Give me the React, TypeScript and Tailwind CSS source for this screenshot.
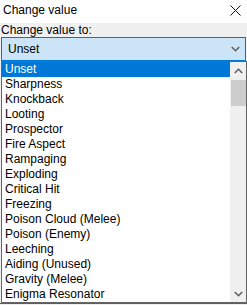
const items = [
  'Unset',
  'Sharpness',
  'Knockback',
  'Looting',
  'Prospector',
  'Fire Aspect',
  'Rampaging',
  'Exploding',
  'Critical Hit',
  'Freezing',
  'Poison Cloud (Melee)',
  'Poison (Enemy)',
  'Leeching',
  'Aiding (Unused)',
  'Gravity (Melee)',
  'Enigma Resonator',
];

function Chevron({ up, className }: { up?: boolean; className?: string }) {
  return (
    <svg width="9" height="6" viewBox="0 0 9 6" className={className}>
      <path
        d={up ? 'M0.8 5 L4.5 1.3 L8.2 5' : 'M0.8 1 L4.5 4.7 L8.2 1'}
        fill="none"
        stroke="#606060"
        strokeWidth="1.6"
      />
    </svg>
  );
}

export default function App() {
  return (
    <div className="w-[247px] h-[305px] overflow-hidden bg-[#f0f0f0] text-[12px] leading-[15px] text-black font-['Liberation_Sans',Arial,sans-serif]">
      {/* Title bar */}
      <div className="h-[23px] bg-white flex items-center justify-between pl-[3px] pr-[6px]">
        <span className="-mt-[3px]">Change value</span>
        <svg width="11" height="11" viewBox="0 0 11 11" className="-mt-[2px]">
          <path d="M0.5 0.5 L10.5 10.5 M10.5 0.5 L0.5 10.5" stroke="#111" strokeWidth="1" />
        </svg>
      </div>

      {/* Label */}
      <div className="h-[13px] pl-[1px] leading-[13px] mt-[1px]">Change value to:</div>

      {/* Combo */}
      <div className="ml-[1px] w-[245px] h-[24px] border border-[#0078d7] bg-[#cce4f7] flex items-center justify-between pl-[6px] pr-[5px]">
        <span>Unset</span>
        <Chevron />
      </div>

      {/* Dropdown list */}
      <div className="ml-[1px] w-[246px] h-[242px] border border-[#646464] bg-white flex">
        <div className="flex-1 flex flex-col">
          {items.map((item, i) => (
            <div
              key={item}
              className={
                i === 0
                  ? 'h-[15px] pl-[3px] bg-[#0078d7] text-white whitespace-nowrap'
                  : 'h-[15px] pl-[3px] whitespace-nowrap'
              }
            >
              {item}
            </div>
          ))}
        </div>
        <div className="w-[16px] bg-[#f0f0f0] flex flex-col items-center">
          <div className="h-[17px] flex items-center justify-center">
            <Chevron up />
          </div>
          <div className="w-[15px] h-[26px] mt-[1px] bg-[#cdcdcd]" />
          <div className="flex-1" />
          <div className="h-[17px] flex items-center justify-center">
            <Chevron />
          </div>
        </div>
      </div>
      <div className="h-[1px] bg-[#0078d7]" />
    </div>
  );
}
